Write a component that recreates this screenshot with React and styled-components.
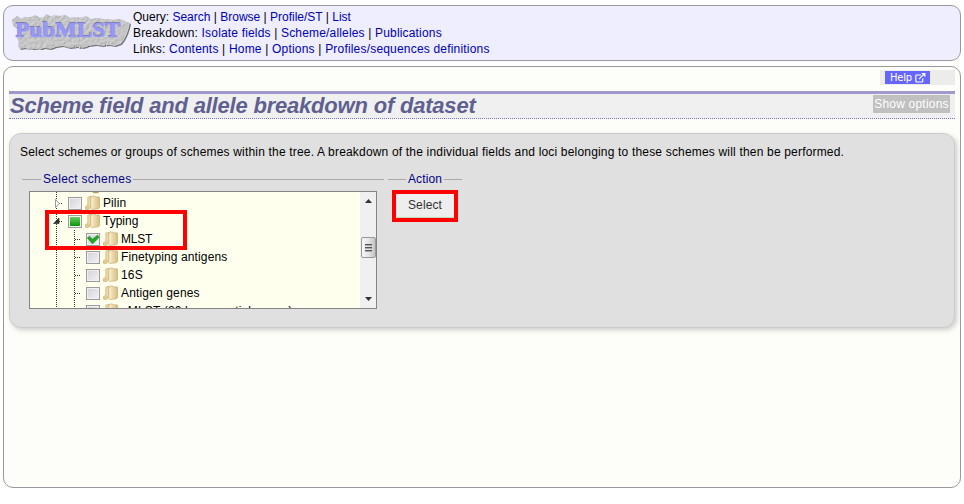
import React from 'react';
import styled, { createGlobalStyle } from 'styled-components';

const GlobalStyle = createGlobalStyle`
  * { box-sizing: border-box; }
  html, body { margin: 0; background: #fff; }
  body { font: 12px/16px "Liberation Sans", Arial, sans-serif; color: #000; overflow: hidden; }
  svg { display: block; }
`;

const Page = styled.div`
  display: flex;
  flex-direction: column;
  gap: 5px;
  width: 964px;
  height: 504px;
  padding: 5px 3px 16px;
`;

const Header = styled.header`
  display: flex;
  height: 56px;
  flex: none;
  padding: 3px 4px;
  background: #eeeeff;
  border: 1px solid #999;
  border-radius: 10px;
`;

const LogoSlot = styled.div`
  width: 125px;
  padding-top: 3px;
`;

const Menu = styled.nav`
  display: flex;
  flex-direction: column;
`;

const MenuLine = styled.div`
  height: 16px;
  white-space: pre;
  letter-spacing: ${(p) => p.$spacing || '0'};
`;

const Link = styled.a`
  color: #0000b4;
`;

const Main = styled.main`
  flex: 1;
  padding: 3px 5px;
  background: #fdfef9;
  border: 1px solid #999;
  border-radius: 10px;
`;

const HelpBar = styled.div`
  width: 75px;
  height: 15px;
  margin-left: auto;
  padding: 1px 5px;
  background: #ececea;
`;

const HelpButton = styled.a`
  display: flex;
  align-items: center;
  gap: 3px;
  width: 45px;
  height: 13px;
  padding-left: 5px;
  background: #6666ff;
  color: #fff;
  font: 10px/13px "DejaVu Sans", sans-serif;
  letter-spacing: -0.25px;
`;

const TitleBar = styled.div`
  display: flex;
  justify-content: space-between;
  height: 28px;
  margin-top: 6px;
  background: #f0f0f0;
  border-top: 3px solid #a099cc;
  border-bottom: 1px dotted #7777bb;
`;

const Title = styled.h1`
  margin: 0;
  padding-left: 1px;
  color: #606090;
  font: italic bold 22px/23px "Liberation Sans", Arial, sans-serif;
  letter-spacing: -0.2px;
  white-space: nowrap;
`;

const ShowOptions = styled.a`
  width: 77px;
  height: 18px;
  margin: 1px 5px 0 0;
  background: #c0c0c0;
  color: #fff;
  line-height: 18px;
  text-align: center;
  letter-spacing: 0.2px;
  white-space: nowrap;
`;

const Panel = styled.section`
  height: 195px;
  margin-top: 14px;
  padding: 10px 10px 0;
  background: #e0e0e0;
  border: 1px solid #ccc;
  border-radius: 12px;
  box-shadow: 2px 2px 5px #ccc;
`;

const Intro = styled.p`
  margin: 0;
  white-space: nowrap;
  letter-spacing: 0.181px;
`;

const Groups = styled.div`
  display: flex;
  gap: 4px;
  padding: 11px 0 0 2px;
`;

const Group = styled.div`
  width: ${(p) => p.$width}px;
`;

const Legend = styled.div`
  display: flex;
  align-items: center;
  gap: 2px;
  height: 16px;
  color: #000080;
  white-space: nowrap;
  letter-spacing: ${(p) => p.$spacing};

  &::before, &::after {
    content: "";
    height: 1px;
    background: #aaa;
  }
  &::before { width: ${(p) => p.$lead}px; }
  &::after { flex: 1; }
`;

const TreeFrame = styled.div`
  position: relative;
  display: flex;
  width: 348px;
  height: 118px;
  margin: 4px 0 0 7px;
  background: #ffffee;
  border: 1px solid #848484;
`;

const TreeView = styled.div`
  flex: 1;
  height: 116px;
  overflow: hidden;
`;

const TreeRow = styled.div`
  display: flex;
  height: 18px;
  white-space: nowrap;
`;

const RowLabel = styled.span`
  padding-left: 3px;
  line-height: 18px;
  letter-spacing: ${(p) => p.$spacing || '0'};
`;

const ScrollTrack = styled.div`
  display: flex;
  flex-direction: column;
  align-items: center;
  width: 16px;
  padding: 7px 0 6px;
  background: #f0f0f0;
`;

const Thumb = styled.div`
  display: flex;
  flex-direction: column;
  align-items: center;
  justify-content: center;
  gap: 1px;
  width: 15px;
  height: 21px;
  margin: 34px 0 39px;
  background: linear-gradient(90deg, #f8f8f8, #e4e4e5 50%, #c5c5c9);
  border: 1px solid #999;
  border-radius: 2px;
`;

const Grip = styled.i`
  width: 7px;
  height: 2px;
  background: linear-gradient(#555 50%, #aaa 50%);
`;

const Highlight = styled.div`
  position: absolute;
  left: ${(p) => p.$x}px;
  top: ${(p) => p.$y}px;
  width: ${(p) => p.$w}px;
  height: ${(p) => p.$h}px;
  border: 4px solid #fe0000;
`;

const ActionBox = styled.div`
  position: relative;
  margin: 7px 0 0 8px;
  width: 58px;
`;

const SelectButton = styled.button`
  display: block;
  width: 58px;
  height: 24px;
  padding: 0 0 2px;
  background: #eee;
  border: 0;
  border-bottom: 1px solid #b4dfa8;
  border-radius: 3px;
  color: #333;
  font: 12px/20px "Liberation Sans", Arial, sans-serif;
  letter-spacing: 0.1px;
`;

function Logo() {
  const stone =
    'M5 13l-1-5 5-4 3 3 5-2 6 0 4-2 3 3 6-1 2-3 4 3 4-2 5 1 7-1 3 3 6-1 6 1 5-2 4 3 8-1 5 1 5 0 5 1 5-1 4 1 4 2 4 1-1 5-2 6-3 6-3 4-6 2-6-1-6 1-7-1-7 1-5 2-7-1-7 1-7-2-7 1-5 2-7-1-4 2-6-1-4 2-4-3-6 1-2-4 1-4-2-3 1-5 3-2z';
  return (
    <svg width="123" height="38" viewBox="0 0 123 38">
      <defs>
        <filter id="stone" x="-2%" y="-10%" width="104%" height="125%" colorInterpolationFilters="sRGB">
          <feTurbulence type="fractalNoise" baseFrequency=".35" numOctaves="2" seed="6" result="noise" />
          <feDiffuseLighting in="noise" surfaceScale=".45" diffuseConstant="1" lightingColor="#e0e0e0" result="light">
            <feDistantLight azimuth="225" elevation="62" />
          </feDiffuseLighting>
          <feDisplacementMap in="SourceGraphic" in2="noise" scale="2" xChannelSelector="R" yChannelSelector="G" result="edge" />
          <feComposite in="light" in2="edge" operator="in" result="face" />
          <feDropShadow in="face" dx=".8" dy=".8" stdDeviation=".5" floodColor="#444" floodOpacity=".9" />
        </filter>
      </defs>
      <path d={stone} fill="#bbb" filter="url(#stone)" />
      <g fontFamily="Liberation Serif, serif" fontWeight="bold" fontSize="22" strokeWidth=".5">
        <text x="7" y="24.3" textLength="105" lengthAdjust="spacingAndGlyphs" fill="#77778c">PubMLST</text>
        <text x="7.6" y="25.1" textLength="105" lengthAdjust="spacingAndGlyphs" fill="#9898fa" stroke="#9898fa">PubMLST</text>
      </g>
    </svg>
  );
}

function ExternalIcon() {
  return (
    <svg width="11" height="10" viewBox="0 0 11 10" fill="none" stroke="#fff" strokeWidth="1.2">
      <path d="M6 2H1.8Q.8 2 .8 3v5q0 1 1 1h5q1 0 1-1V5.5M4 6.2L8.8 1.4" />
      <path d="M6.2 0h4.2v4.2z" fill="#fff" stroke="none" />
    </svg>
  );
}

function FolderArt({ x }) {
  return (
    <g transform={`translate(${x} 0)`}>
      <path d="M2.8 3.2l3.2-1v11.3l-3.2 2.2-2.3-.5v-2.6L2.8 11z" fill="#ecdba9" stroke="#c0a466" strokeWidth=".6" />
      <path d="M6.2 2.8l1-.8h2.6l.8 1 3.4-.2.5.8v10l-1.4 1.2-6.4.7-.5-.6z" fill="url(#folder)" stroke="#bda166" strokeWidth=".6" />
      <path d="M6.8 4v10.5" stroke="#fff8de" strokeWidth=".8" />
      <path d="M1 14.7v-2l2-1.2 1.6.8V14l-1.8 1z" fill="#dfc98e" />
    </g>
  );
}

function CheckArt({ x, state }) {
  return (
    <g transform={`translate(${x} 3)`}>
      <rect x=".5" y=".5" width="13" height="12" fill="url(#box)" stroke="#9b9b9b" />
      <rect x="1.5" y="1.5" width="11" height="10" fill="none" stroke="#f1f1f1" />
      {state === 'partial' && <rect x="2" y="2" width="10" height="9" rx=".8" fill="url(#green)" />}
      {state === 'checked' && <path d="M1.2 4.8l2.4-1.4 2.9 2.7 5.3-4.2L13 4.4 6.5 11z" fill="#23a524" stroke="#178b19" strokeWidth=".5" />}
    </g>
  );
}

/* Guides, expander, checkbox and folder drawn at the left of one row. */
function RowArt({ depth, state, expander }) {
  const x = depth * 18;
  const width = x + 52;
  return (
    <svg width={width} height="18" viewBox={`0 0 ${width} 18`}>
      <defs>
        <linearGradient id="folder"><stop stopColor="#f8edcb" /><stop offset="1" stopColor="#d8be80" /></linearGradient>
        <linearGradient id="box" x2="1" y2="1"><stop stopColor="#d0d0d8" /><stop offset="1" stopColor="#f5f5f5" /></linearGradient>
        <linearGradient id="green" x2="0" y2="1"><stop stopColor="#68cf5f" /><stop offset="1" stopColor="#099407" /></linearGradient>
      </defs>
      <g stroke="#333" strokeDasharray="1 1">
        <path d="M26.5 0v18" />
        {depth === 2 && <path d="M44.5 0v18" />}
        <path d={`M${x + 9} 9.5h6`} />
      </g>
      {expander === 'closed' && <path d="M25.5 5.5v8l3.8-4z" fill="#fff" stroke="#999" />}
      {expander === 'open' && <path d="M23.5 11.5h5.5V6z" fill="#333" stroke="#222" strokeWidth=".6" />}
      <CheckArt x={x + 20} state={state} />
      <FolderArt x={x + 37} />
    </svg>
  );
}

/* Bottom edge of the row scrolled out of sight above the list. */
function ClippedRowArt() {
  return (
    <svg width="330" height="2" viewBox="0 0 330 2">
      <path d="M26.5 0v2" stroke="#333" strokeDasharray="1 1" />
      <path d="M62 0h7l-1 1.2h-4z" fill="#b99d5d" />
    </svg>
  );
}

const rows = [
  { label: 'Pilin', depth: 1, expander: 'closed', spacing: '0.1px' },
  { label: 'Typing', depth: 1, expander: 'open', state: 'partial' },
  { label: 'MLST', depth: 2, state: 'checked', spacing: '-0.2px' },
  { label: 'Finetyping antigens', depth: 2, spacing: '0.12px' },
  { label: '16S', depth: 2, spacing: '0.2px' },
  { label: 'Antigen genes', depth: 2, spacing: '0.15px' },
  { label: 'eMLST (20 locus partial genes)', depth: 2, spacing: '0.16px' },
];

const menus = [
  { name: 'Query', spacing: '0', links: ['Search', 'Browse', 'Profile/ST', 'List'] },
  { name: 'Breakdown', spacing: '0.17px', links: ['Isolate fields', 'Scheme/alleles', 'Publications'] },
  { name: 'Links', spacing: '0.19px', links: ['Contents', 'Home', 'Options', 'Profiles/sequences definitions'] },
];

export default function App() {
  return (
    <>
      <GlobalStyle />
      <Page>
        <Header>
          <LogoSlot><Logo /></LogoSlot>
          <Menu>
            {menus.map((m) => (
              <MenuLine key={m.name} $spacing={m.spacing}>
                {m.name}:{' '}
                {m.links.map((l, i) => (
                  <React.Fragment key={l}>
                    {i > 0 && ' | '}
                    <Link>{l}</Link>
                  </React.Fragment>
                ))}
              </MenuLine>
            ))}
          </Menu>
        </Header>
        <Main>
          <HelpBar><HelpButton>Help <ExternalIcon /></HelpButton></HelpBar>
          <TitleBar>
            <Title>Scheme field and allele breakdown of dataset</Title>
            <ShowOptions>Show options</ShowOptions>
          </TitleBar>
          <Panel>
            <Intro>
              Select schemes or groups of schemes within the tree. A breakdown of the individual fields and loci belonging to these schemes will then be performed.
            </Intro>
            <Groups>
              <Group $width={362}>
                <Legend $lead={19} $spacing="0.27px">Select schemes</Legend>
                <TreeFrame>
                  <TreeView>
                    <ClippedRowArt />
                    {rows.map(({ label, spacing, ...art }) => (
                      <TreeRow key={label}>
                        <RowArt {...art} />
                        <RowLabel $spacing={spacing}>{label}</RowLabel>
                      </TreeRow>
                    ))}
                  </TreeView>
                  <ScrollTrack>
                    <svg width="7" height="4" viewBox="0 0 7 4"><path d="M0 4L3.5 0 7 4z" fill="#333" /></svg>
                    <Thumb><Grip /><Grip /><Grip /></Thumb>
                    <svg width="7" height="4" viewBox="0 0 7 4"><path d="M0 0h7L3.5 4z" fill="#333" /></svg>
                  </ScrollTrack>
                  <Highlight $x={15} $y={18} $w={142} $h={40} />
                </TreeFrame>
              </Group>
              <Group $width={74}>
                <Legend $lead={18} $spacing="0.1px">Action</Legend>
                <ActionBox>
                  <SelectButton>Select</SelectButton>
                  <Highlight $x={-4} $y={-4} $w={66} $h={32} />
                </ActionBox>
              </Group>
            </Groups>
          </Panel>
        </Main>
      </Page>
    </>
  );
}
